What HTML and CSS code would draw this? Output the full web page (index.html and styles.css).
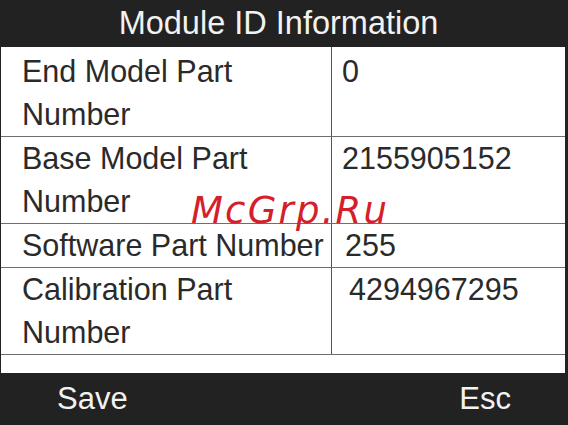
FILE: index.html
```html
<!DOCTYPE html>
<html>
<head>
<meta charset="utf-8">
<link rel="stylesheet" href="styles.css">
</head>
<body>
<div class="screen">
  <div class="header">Module ID Information</div>
  <div class="table">
    <div class="row first">
      <div class="label">End Model Part<br>Number</div>
      <div class="value">0</div>
    </div>
    <div class="row">
      <div class="label">Base Model Part<br>Number</div>
      <div class="value">2155905152</div>
    </div>
    <div class="row">
      <div class="label">Software Part Number</div>
      <div class="value v-shift1">255</div>
    </div>
    <div class="row">
      <div class="label">Calibration Part<br>Number</div>
      <div class="value v-shift2">4294967295</div>
    </div>
    <div class="spacer"></div>
  </div>
  <div class="footer">
    <span>Save</span>
    <span>Esc</span>
  </div>
  <div class="watermark">McGrp.Ru</div>
</div>
</body>
</html>
```
FILE: styles.css
```css
html, body {
  margin: 0;
  padding: 0;
}
body {
  background: #222222;
  font-family: "Liberation Sans", Arial, sans-serif;
}
.screen {
  position: relative;
  width: 568px;
  height: 425px;
  display: flex;
  flex-direction: column;
  overflow: hidden;
}
.header {
  height: 47px;
  line-height: 46px;
  text-align: center;
  color: #f2f2f2;
  font-size: 32.5px;
  padding-right: 11px;
}
.table {
  flex: 1;
  background: #ffffff;
  margin: 0 3px 0 1px;
  display: flex;
  flex-direction: column;
  color: #2a2a2a;
}
.row {
  display: grid;
  grid-template-columns: 331px 1fr;
  border-bottom: 1px solid #6e6e6e;
  font-size: 30.5px;
  line-height: 43px;
}
.row.first > div {
  padding-top: 3px;
}
.label {
  padding-left: 21px;
  border-right: 1px solid #555555;
  white-space: nowrap;
}
.value {
  padding-left: 10px;
}
.v-shift1 {
  padding-left: 13px;
}
.v-shift2 {
  padding-left: 17px;
}
.spacer {
  flex: 1;
}
.footer {
  height: 52px;
  display: flex;
  justify-content: space-between;
  align-items: center;
  padding: 0 57px 0 57px;
  color: #f2f2f2;
  font-size: 31px;
}
.watermark {
  position: absolute;
  left: 191px;
  top: 189px;
  font-family: "DejaVu Sans", sans-serif;
  font-style: italic;
  font-size: 37px;
  letter-spacing: 2.2px;
  color: #d4202a;
  line-height: 44px;
}
```
